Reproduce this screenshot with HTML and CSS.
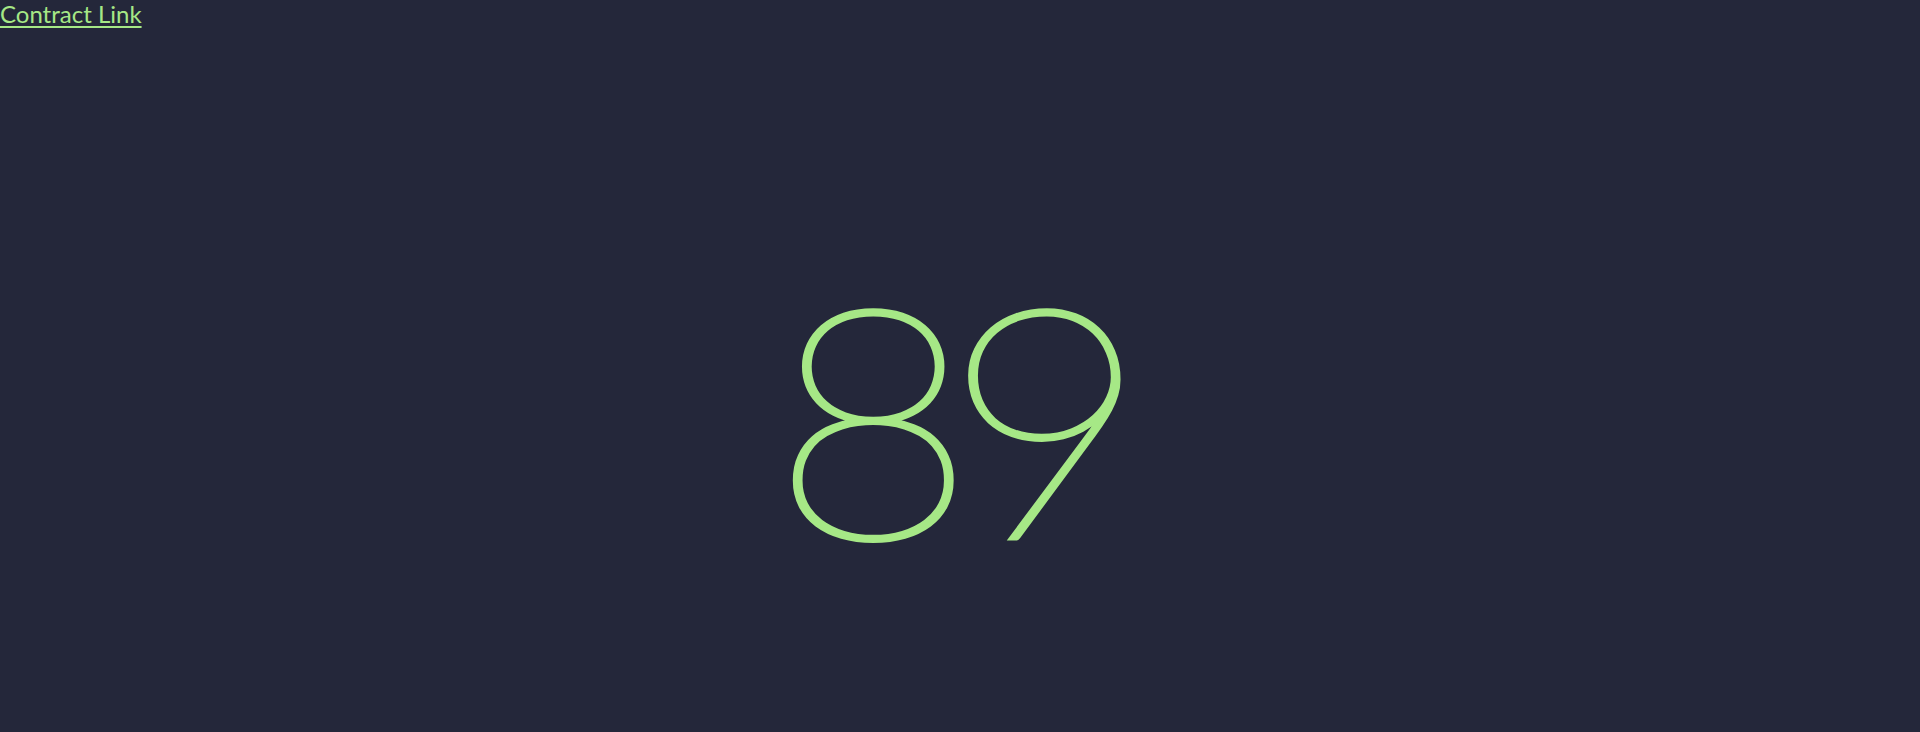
FILE: index.html
```html
<!DOCTYPE html>
<html lang="en">
<head>
<meta charset="utf-8">
<title>89</title>
<link rel="stylesheet" href="styles.css">
</head>
<body>
<a class="contract-link" href="#">Contract Link</a>
<main class="stage">
  <div class="counter">89</div>
</main>
</body>
</html>
```
FILE: styles.css
```css
html, body {
  margin: 0;
  height: 100%;
}
body {
  background: #24273a;
  display: flex;
  flex-direction: column;
  font-family: "Lato", "Noto Sans", sans-serif;
}
.contract-link {
  color: #a6e886;
  font-size: 24px;
  line-height: 28px;
  text-decoration: underline;
  text-decoration-thickness: 2px;
  text-underline-offset: 3px;
  align-self: flex-start;
}
.stage {
  flex: 1;
  display: flex;
  align-items: center;
  justify-content: center;
  padding-top: 67px;
}
.counter {
  color: #a6e886;
  font-family: "Lato", sans-serif;
  font-weight: 100;
  font-size: 321px;
  line-height: 1;
  letter-spacing: -29px;
  padding-right: 29px;
  -webkit-text-stroke: 5px #a6e886;
  transform: scaleX(1.1);
}
```
